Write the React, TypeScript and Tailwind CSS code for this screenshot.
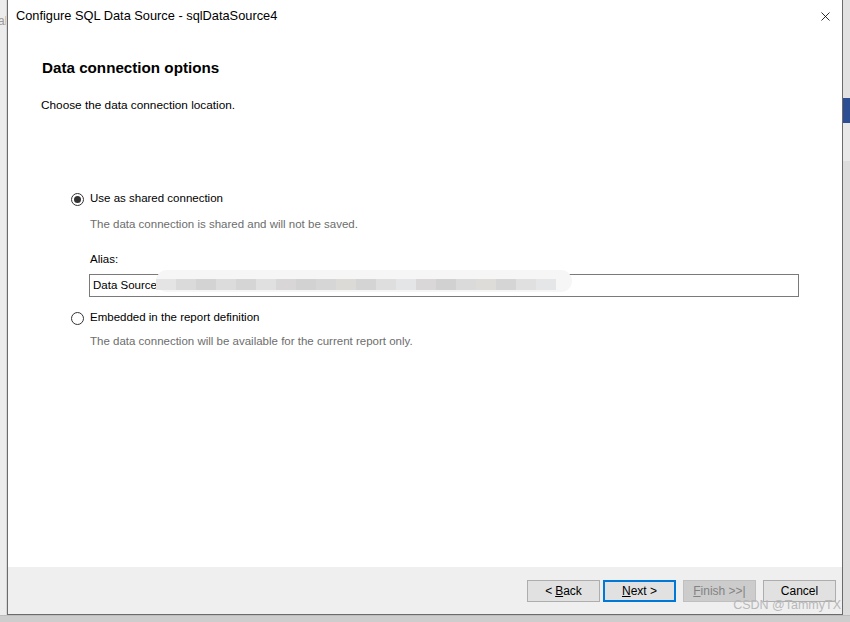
import { X } from "lucide-react";

const font = { fontFamily: '"Liberation Sans", Arial, sans-serif' };

function Radio({ checked }: { checked?: boolean }) {
  return (
    <div className="w-[13px] h-[13px] rounded-full border border-[#333333] bg-white flex items-center justify-center shrink-0">
      {checked && <div className="w-[7px] h-[7px] rounded-full bg-[#333333]" />}
    </div>
  );
}

function WizButton({ children, variant }: { children: React.ReactNode; variant?: "default" | "primary" | "disabled" }) {
  const cls =
    variant === "primary"
      ? "border-2 border-[#0078d7] bg-[#e1e1e1] text-black"
      : variant === "disabled"
      ? "border border-[#bfbfbf] bg-[#cccccc] text-[#838383]"
      : "border border-[#adadad] bg-[#e1e1e1] text-black";
  return (
    <div className={`w-[73px] h-[22px] flex items-center justify-center text-[12px] ${cls}`}>{children}</div>
  );
}

export default function App() {
  return (
    <div className="w-[850px] h-[622px] overflow-hidden bg-[#e4e4e4] flex flex-col relative" style={font}>
      <div className="flex h-[615px]">
        {/* left edge of window behind */}
        <div className="w-[7px] bg-[#ececec] border-r border-[#d6d6d6] overflow-hidden pt-[12px]">
          <span className="text-[12px] text-[#9a9a9a] -ml-[2px] block">ab</span>
        </div>

        {/* Dialog */}
        <div className="w-[836px] bg-white border-l border-r border-b border-[#6b6b6b] flex flex-col">
          {/* Title bar */}
          <div className="h-[32px] flex items-center justify-between pl-[8px] pr-[9px]">
            <span className="text-[12.8px] text-black">Configure SQL Data Source - sqlDataSource4</span>
            <X className="w-[15px] h-[15px] text-black" strokeWidth={1.3} />
          </div>

          {/* Content */}
          <div className="flex-1 flex flex-col">
            <h1 className="pl-[34px] pt-[26px] text-[15.2px] font-semibold text-black leading-[20px]">Data connection options</h1>
            <p className="pl-[33px] pt-[20px] text-[11.8px] text-black leading-[14px]">Choose the data connection location.</p>

            <div className="pl-[63px] pt-[79px] pr-[43px] flex flex-col">
              <div className="flex items-center gap-[6px] h-[16px]">
                <Radio checked />
                <span className="text-[11.5px] text-black">Use as shared connection</span>
              </div>
              <p className="pl-[19px] pt-[10px] text-[11.5px] text-[#6d6d6d] leading-[14px]">
                The data connection is shared and will not be saved.
              </p>
              <p className="pl-[19px] pt-[21px] text-[11.5px] text-black leading-[14px]">Alias:</p>
              <div className="ml-[18px] mt-[8px] h-[23px] border border-[#7a7a7a] flex items-center pl-[3px] relative">
                <span className="text-[11.5px] text-black">Data Source</span>
                <div className="absolute left-[66px] top-[-5px] w-[416px] h-[22px] rounded-full bg-[#f6f6f6]" />
                <div className="absolute left-[66px] top-[4px] h-[11px] flex">
                  <div className="w-[20px] bg-[#e4e4e4]" />
                  <div className="w-[20px] bg-[#dadada]" />
                  <div className="w-[20px] bg-[#d3d3d3]" />
                  <div className="w-[20px] bg-[#dcdcdc]" />
                  <div className="w-[20px] bg-[#d5d5d5]" />
                  <div className="w-[20px] bg-[#e0e0e0]" />
                  <div className="w-[20px] bg-[#d8d6d7]" />
                  <div className="w-[20px] bg-[#d2d2d2]" />
                  <div className="w-[20px] bg-[#d6d6d6]" />
                  <div className="w-[20px] bg-[#dcdad6]" />
                  <div className="w-[20px] bg-[#d4d4d4]" />
                  <div className="w-[20px] bg-[#dedede]" />
                  <div className="w-[20px] bg-[#e4e5e7]" />
                  <div className="w-[20px] bg-[#d9d7d8]" />
                  <div className="w-[20px] bg-[#d1d1d1]" />
                  <div className="w-[20px] bg-[#dadada]" />
                  <div className="w-[20px] bg-[#dedcd8]" />
                  <div className="w-[20px] bg-[#d5d5d5]" />
                  <div className="w-[20px] bg-[#e0e0e0]" />
                  <div className="w-[20px] bg-[#e5e6e8]" />
                </div>
              </div>
              <div className="flex items-center gap-[6px] h-[16px] mt-[13px]">
                <Radio />
                <span className="text-[11.5px] text-black">Embedded in the report definition</span>
              </div>
              <p className="pl-[19px] pt-[8px] text-[11.5px] text-[#6d6d6d] leading-[14px]">
                The data connection will be available for the current report only.
              </p>
            </div>
          </div>

          {/* Footer */}
          <div className="h-[47px] bg-[#efefef] flex items-start justify-end gap-[3px] pt-[13px] pr-[6px]">
            <WizButton>
              &lt; <span className="underline ml-[3px]">B</span>ack
            </WizButton>
            <WizButton variant="primary">
              <span className="underline">N</span>ext &gt;
            </WizButton>
            <div className="w-[1px]" />
            <WizButton variant="disabled">
              <span className="underline">F</span>inish &gt;&gt;|
            </WizButton>
            <div className="w-[1px]" />
            <WizButton>Cancel</WizButton>
          </div>
        </div>

        {/* right edge of window behind */}
        <div className="w-[7px] bg-[#e2e2e2] flex flex-col">
          <div className="h-[98px]" />
          <div className="h-[25px] bg-[#2c4f94]" />
          <div className="h-[38px] bg-[#e8e8e8]" />
          <div className="flex-1 bg-[#dcdcdc]" />
        </div>
      </div>
      <div className="flex-1 bg-[#cdcdcd] border-t border-[#bdbdbd]" />

      {/* watermark */}
      <span className="absolute right-[9px] bottom-[7px] text-[12.5px] text-[#b8b8b8]">CSDN @TammyTX</span>
    </div>
  );
}
